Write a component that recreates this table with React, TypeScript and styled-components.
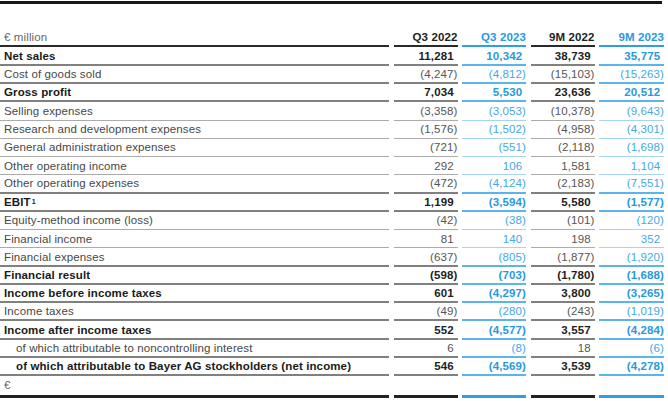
import React from "react";
import styled, { createGlobalStyle } from "styled-components";

const Global = createGlobalStyle`
  html, body { margin: 0; padding: 0; background: #fff; }
  body { font-family: "Liberation Sans", Arial, Helvetica, sans-serif; }
`;

type Tone = "gray" | "blue";
type Rule = "none" | "thin" | "thick" | "head";

const ruleColor = (tone: Tone, rule: Rule) => {
  if (rule === "none") return "transparent";
  if (tone === "blue") {
    if (rule === "head") return "#2e9fe4";
    if (rule === "thick") return "#5cb4ec";
    return "#a6d5f4";
  }
  if (rule === "head") return "#2a2a2a";
  if (rule === "thick") return "#808080";
  return "#ababab";
};
const ruleWidth = (rule: Rule) => (rule === "thin" ? 1 : rule === "none" ? 0 : 2);

const Page = styled.div`
  width: 668px;
  padding-top: 1px;
`;

const TopBar = styled.div`
  width: 662px;
  height: 3px;
  background: #161616;
`;

const Table = styled.div`
  margin-top: 25.2px;
`;

const Row = styled.div`
  display: grid;
  grid-template-columns: 389px 64px 64px 64px 65px;
  column-gap: 4.5px;
  height: 18.28px;
`;

const Cell = styled.div<{ $tone: Tone; $rule: Rule }>`
  box-sizing: border-box;
  height: 100%;
  display: flex;
  align-items: center;
  font-size: 11.5px;
  letter-spacing: 0.12px;
  white-space: nowrap;
  border-bottom: ${(p) => ruleWidth(p.$rule)}px solid ${(p) => ruleColor(p.$tone, p.$rule)};
`;

const Label = styled(Cell)<{ $bold?: boolean; $indent?: boolean; $muted?: boolean }>`
  padding-left: ${(p) => (p.$indent ? 16 : 4)}px;
  font-weight: ${(p) => (p.$bold ? 700 : 400)};
  color: ${(p) => (p.$bold ? "#1a1a1a" : p.$muted ? "#666" : "#474747")};
`;

const Num = styled(Cell)<{ $bold?: boolean; $paren?: boolean }>`
  justify-content: flex-end;
  padding-right: ${(p) => (p.$paren ? 0 : 3.8)}px;
  font-weight: ${(p) => (p.$bold ? 700 : 400)};
  color: ${(p) =>
    p.$tone === "blue"
      ? p.$bold
        ? "#2899e0"
        : "#45a8e8"
      : p.$bold
      ? "#1e1e1e"
      : "#555"};
`;

const Head = styled(Cell)`
  justify-content: flex-end;
  font-weight: 700;
  color: ${(p) => (p.$tone === "blue" ? "#2899e0" : "#1e1e1e")};
`;

const BarRow = styled.div`
  display: grid;
  grid-template-columns: 389px 64px 64px 64px 65px;
  column-gap: 4.5px;
  height: 3px;
`;

const BarSeg = styled.div<{ $tone: Tone }>`
  background: ${(p) => (p.$tone === "blue" ? "#2e9fe4" : "#222")};
`;

const Sup = styled.sup`
  font-size: 7px;
  line-height: 0;
  vertical-align: 4px;
  margin-left: 1px;
`;

type RowData = {
  label: React.ReactNode;
  bold?: boolean;
  indent?: boolean;
  values: string[];
};

const rows: RowData[] = [
  { label: "Net sales", bold: true, values: ["11,281", "10,342", "38,739", "35,775"] },
  { label: "Cost of goods sold", values: ["(4,247)", "(4,812)", "(15,103)", "(15,263)"] },
  { label: "Gross profit", bold: true, values: ["7,034", "5,530", "23,636", "20,512"] },
  { label: "Selling expenses", values: ["(3,358)", "(3,053)", "(10,378)", "(9,643)"] },
  { label: "Research and development expenses", values: ["(1,576)", "(1,502)", "(4,958)", "(4,301)"] },
  { label: "General administration expenses", values: ["(721)", "(551)", "(2,118)", "(1,698)"] },
  { label: "Other operating income", values: ["292", "106", "1,581", "1,104"] },
  { label: "Other operating expenses", values: ["(472)", "(4,124)", "(2,183)", "(7,551)"] },
  { label: <>EBIT<Sup>1</Sup></>, bold: true, values: ["1,199", "(3,594)", "5,580", "(1,577)"] },
  { label: "Equity-method income (loss)", values: ["(42)", "(38)", "(101)", "(120)"] },
  { label: "Financial income", values: ["81", "140", "198", "352"] },
  { label: "Financial expenses", values: ["(637)", "(805)", "(1,877)", "(1,920)"] },
  { label: "Financial result", bold: true, values: ["(598)", "(703)", "(1,780)", "(1,688)"] },
  { label: "Income before income taxes", bold: true, values: ["601", "(4,297)", "3,800", "(3,265)"] },
  { label: "Income taxes", values: ["(49)", "(280)", "(243)", "(1,019)"] },
  { label: "Income after income taxes", bold: true, values: ["552", "(4,577)", "3,557", "(4,284)"] },
  { label: "of which attributable to noncontrolling interest", indent: true, values: ["6", "(8)", "18", "(6)"] },
  {
    label: "of which attributable to Bayer AG stockholders (net income)",
    bold: true,
    indent: true,
    values: ["546", "(4,569)", "3,539", "(4,278)"],
  },
];

const tones: Tone[] = ["gray", "blue", "gray", "blue"];
const heads = ["Q3 2022", "Q3 2023", "9M 2022", "9M 2023"];

export default function App() {
  return (
    <Page>
      <Global />
      <TopBar />
      <Table>
        <Row>
          <Label $tone="gray" $rule="head" $muted>
            € million
          </Label>
          {heads.map((h, i) => (
            <Head key={h} $tone={tones[i]} $rule="head">
              {h}
            </Head>
          ))}
        </Row>
        {rows.map((r, idx) => {
          const next = rows[idx + 1];
          const rule: Rule = r.bold || (next && next.bold) ? "thick" : "thin";
          return (
            <Row key={idx}>
              <Label $tone="gray" $rule={rule} $bold={r.bold} $indent={r.indent}>
                {r.label}
              </Label>
              {r.values.map((v, i) => (
                <Num
                  key={i}
                  $tone={tones[i]}
                  $rule={rule}
                  $bold={r.bold}
                  $paren={v.endsWith(")")}
                >
                  {v}
                </Num>
              ))}
            </Row>
          );
        })}
        <Row>
          <Label $tone="gray" $rule="none" $muted>
            €
          </Label>
          {tones.map((t, i) => (
            <Cell key={i} $tone={t} $rule="none" />
          ))}
        </Row>
        <BarRow>
          <BarSeg $tone="gray" />
          {tones.map((t, i) => (
            <BarSeg key={i} $tone={t} />
          ))}
        </BarRow>
      </Table>
    </Page>
  );
}
